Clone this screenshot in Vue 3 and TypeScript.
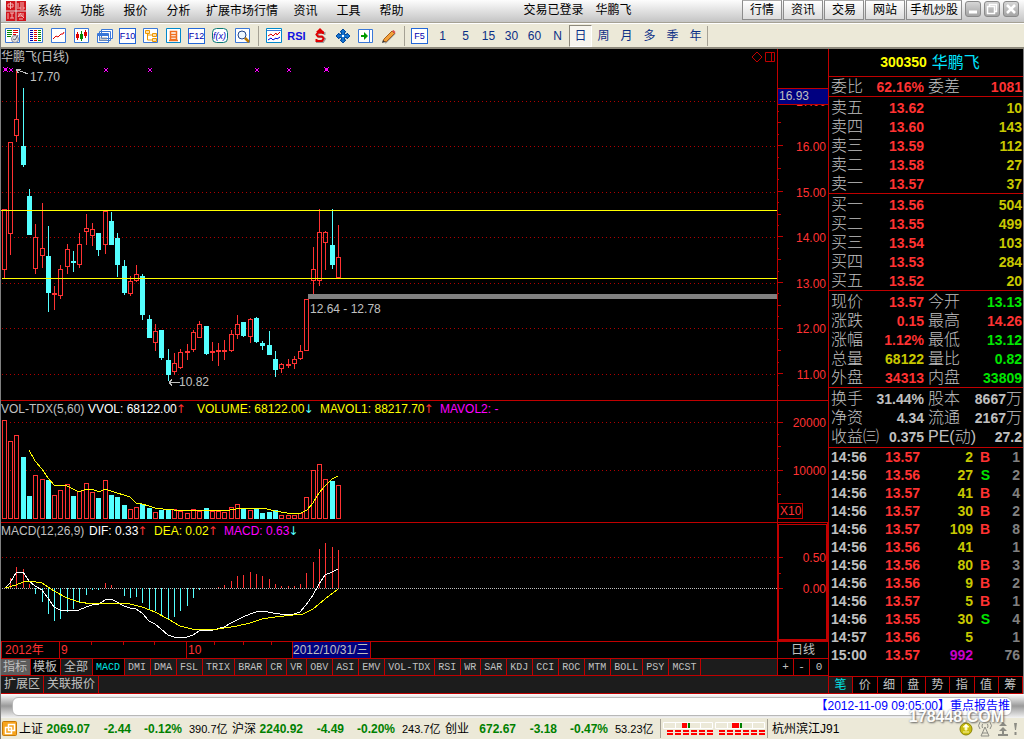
<script setup lang="ts">
import { ref } from 'vue'

type Candle = [number, number, number, number, 0 | 1]

const menus = ['系统', '功能', '报价', '分析', '扩展市场行情', '资讯', '工具', '帮助']
const links = ['行情', '资讯', '交易', '网站', '手机炒股']
const periods = ['1', '5', '15', '30', '60', 'N', '日', '周', '月', '多', '季', '年']
const period = ref('日')

// Horizontal centre of every trading day on the shared time axis
const slots = [
  3, 9, 15, 22, 28, 34, 41, 47, 53, 59, 66, 72, 78, 85, 91, 97, 104, 110, 116, 123, 129, 135, 141, 148, 154, 160, 167,
  173, 179, 186, 192, 198, 205, 211, 217, 223, 230, 236, 242, 249, 255, 261, 268, 274, 280, 287, 293, 299, 305, 312,
  318, 324, 331, 337,
]

// high, body top, body bottom, low, falling day
const candles: Candle[] = [
  [161, 161, 222, 230, 0], [94, 94, 186, 207, 0], [23, 71, 88, 94, 0], [40, 98, 117, 119, 1], [141, 148, 187, 187, 1],
  [176, 189, 221, 226, 0], [155, 200, 208, 220, 0], [178, 208, 245, 264, 1], [238, 245, 247, 262, 0],
  [217, 221, 248, 251, 0], [196, 201, 219, 226, 0], [203, 213, 215, 224, 1], [185, 196, 217, 220, 0],
  [166, 180, 184, 197, 0], [175, 181, 188, 198, 0], [185, 185, 202, 208, 1], [163, 163, 197, 206, 0],
  [164, 173, 197, 197, 1], [185, 190, 217, 229, 1], [212, 218, 245, 247, 1], [228, 233, 246, 248, 0],
  [217, 226, 233, 234, 0], [226, 228, 267, 272, 1], [267, 271, 290, 290, 1], [276, 283, 295, 303, 0],
  [282, 282, 310, 312, 1], [301, 312, 327, 333, 1], [305, 315, 324, 327, 0], [301, 304, 320, 321, 0],
  [296, 303, 305, 312, 0], [282, 284, 302, 304, 0], [273, 276, 290, 290, 0], [278, 278, 306, 307, 1],
  [294, 303, 304, 313, 0], [295, 302, 304, 318, 0], [292, 302, 304, 312, 0], [282, 286, 303, 304, 0],
  [267, 276, 287, 291, 0], [274, 274, 288, 289, 1], [270, 271, 289, 295, 0], [269, 270, 294, 295, 1],
  [293, 295, 298, 302, 1], [283, 297, 307, 307, 1], [303, 311, 322, 329, 1], [315, 316, 321, 325, 0],
  [311, 316, 318, 320, 0], [308, 311, 316, 321, 0], [297, 303, 311, 312, 0], [251, 251, 303, 303, 0],
  [199, 221, 233, 246, 0], [161, 184, 233, 238, 0], [183, 184, 195, 222, 0], [161, 197, 217, 221, 1],
  [177, 209, 230, 230, 0],
]
const volumeTops = [
  3, 24, 18, 40, 79, 58, 62, 63, 78, 73, 67, 79, 74, 66, 75, 81, 63, 78, 80, 88, 92, 90, 87, 91, 95, 93, 93, 92, 94, 96,
  92, 94, 91, 94, 94, 95, 90, 87, 91, 93, 91, 96, 95, 93, 98, 98, 98, 96, 80, 53, 47, 62, 64, 68,
]
const cyanVolumes = [3, 4, 7, 11, 15, 17, 18, 19, 22, 23, 25, 26, 32, 38, 40, 41, 42, 43, 52]
const macdEnds = [
  49, 39, 28, 30, 45, 55, 63, 75, 82, 80, 73, 70, 64, 56, 51, 51, 44, 46, 49, 57, 59, 58, 64, 70, 72, 76, 80, 78, 72,
  67, 59, 51, 49, 49, 48, 46, 42, 37, 36, 33, 35, 37, 40, 45, 47, 47, 47, 45, 34, 23, 10, 4, 8, 11,
]
const volumeAverage =
  '28,33 34,44 41,52 47,61 53,68 59,68 66,69 72,72 78,75 85,72 91,72 98,75 104,72 110,74 116,76 123,78 129,80 135,86 141,87 148,89 154,91 162,92 173,93 199,93 229,93 242,91 255,91 266,92 274,94 286,96 298,97 306,93 312,86 318,76 324,69 331,62 337,59'
const dif =
  '4,49 9,44 15,34 22,33 28,42 34,47 41,51 47,59 53,68 59,71 66,71 78,71 85,68 91,66 98,65 104,61 110,60 116,63 123,67 129,69 135,70 141,74 148,82 154,85 160,90 167,96 173,98 186,98 192,96 198,92 212,91 223,88 230,84 236,81 242,78 249,75 255,73 262,72 272,74 286,76 293,75 299,73 305,66 312,56 318,45 324,36 331,33 337,30'
const dea =
  '4,49 15,46 22,43 28,42 41,44 53,52 66,59 78,63 91,65 104,64 116,64 129,65 141,68 154,73 167,80 179,87 191,90 217,90 236,87 249,84 261,80 274,78 292,76 302,75 312,70 324,60 337,50'

const priceGrid = [53, 98, 144, 189, 235, 280, 326]
const priceLabels = ['17.00', '16.00', '15.00', '14.00', '13.00', '12.00', '11.00']
const priceTicks = Array.from({ length: 25 }, (_, k) => ({
  y: Math.round(63 + k * 11.4),
  len: (k + 1) % 4 === 0 ? 5 : (k + 1) % 2 === 0 ? 3 : 1,
}))
const volumeTicks = [21, 33, 45, 57, 69, 81, 93, 105]
const marks = [{ x: 4, big: true }, { x: 10 }, { x: 105 }, { x: 149 }, { x: 256 }, { x: 288 }, { x: 325, big: true }]

const indicators = [
  'DMI', 'DMA', 'FSL', 'TRIX', 'BRAR', 'CR', 'VR', 'OBV', 'ASI', 'EMV', 'VOL-TDX', 'RSI', 'WR', 'SAR', 'KDJ', 'CCI',
  'ROC', 'MTM', 'BOLL', 'PSY', 'MCST',
]
const sells = [['卖五', '13.62', '10'], ['卖四', '13.60', '143'], ['卖三', '13.59', '112'], ['卖二', '13.58', '27'], ['卖一', '13.57', '37']]
const buys = [['买一', '13.56', '504'], ['买二', '13.55', '499'], ['买三', '13.54', '103'], ['买四', '13.53', '284'], ['买五', '13.52', '20']]
// label, value, tone, label, value, tone
const quotes = [
  ['现价', '13.57', 'up', '今开', '13.13', 'down'],
  ['涨跌', '0.15', 'up', '最高', '14.26', 'up'],
  ['涨幅', '1.12%', 'up', '最低', '13.12', 'down'],
  ['总量', '68122', 'amount', '量比', '0.82', 'down'],
  ['外盘', '34313', 'up', '内盘', '33809', 'down'],
]
const basics = [
  ['换手', '31.44%', '', '股本', '8667', '万'],
  ['净资', '4.34', '', '流通', '2167', '万'],
  ['收益㈢', '0.375', '', 'PE(动)', '27.2', ''],
]
const trades = [
  ['14:56', '13.57', '2', 'B', '1'], ['14:56', '13.56', '27', 'S', '2'], ['14:56', '13.57', '41', 'B', '4'],
  ['14:56', '13.57', '30', 'B', '2'], ['14:56', '13.57', '109', 'B', '8'], ['14:56', '13.56', '41', '', '1'],
  ['14:56', '13.56', '80', 'B', '3'], ['14:56', '13.56', '9', 'B', '2'], ['14:56', '13.57', '5', 'B', '1'],
  ['14:56', '13.55', '30', 'S', '4'], ['14:57', '13.56', '5', '', '1'], ['15:00', '13.57', '992', '', '76'],
]
const views = ['笔', '价', '细', '盘', '势', '指', '值', '筹']
const indices = [
  ['上证', '2069.07', '-2.44', '-0.12%', '390.7亿'],
  ['沪深', '2240.92', '-4.49', '-0.20%', '243.7亿'],
  ['创业', '672.67', '-3.18', '-0.47%', '53.23亿'],
]
</script>

<template>
  <div class="app">
    <header class="menubar">
      <svg class="brand" width="20" height="20" viewBox="0 0 20 20">
        <path d="M0 0h9.500v9.500H0zM10.500 0H20v9.500h-9.500zM0 10.500h9.500V20H0zM10.500 10.500H20V20h-9.500z" fill="#d0141c" />
        <path d="M2 3h5v3H2zM4.500 1v7M12 2v6M14 2h4M14 4h4M14 6h4v2h-4zM2 12v6M4 12h4M6 12v5M4 17h4M12 13h6M12 15h6M15 12l-3 4M15 14l3 3M13 18h4" fill="none" stroke="#f3b3b3" />
      </svg>
      <nav class="menus">
        <button v-for="m in menus" :key="m" class="menu" type="button">{{ m }}</button>
      </nav>
      <div class="login"><span>交易已登录</span><span>华鹏飞</span></div>
      <div class="links">
        <button v-for="l in links" :key="l" class="link" type="button">{{ l }}</button>
      </div>
      <div class="wins">
        <button type="button" class="win" aria-label="最小化"><svg width="16" height="16"><path d="M4 11h8" stroke="#fff" stroke-width="3" /></svg></button>
        <button type="button" class="win" aria-label="还原"><svg width="16" height="16"><path d="M5.500 5V3.500h7v7H11M3.500 5.500h7v7h-7z" fill="none" stroke="#fff" stroke-width="1.500" /></svg></button>
        <button type="button" class="win" aria-label="关闭"><svg width="16" height="16"><path d="M4 4l8 8M12 4l-8 8" stroke="#fff" stroke-width="2.500" /></svg></button>
      </div>
    </header>

    <div class="toolbar">
      <button type="button" class="tool" aria-label="自选"><svg width="16" height="16"><path d="M.5.5h14v14H.5z" fill="#fff" stroke="#3a78d8" /><path d="M2 2.500h5M2 4.500h5M2 6.500h5M2 8.500h4" stroke="#080" /><path d="M8 2.500h5M8 4.500h5M8 6.500h3" stroke="#d00" /><circle cx="10" cy="11" r="3.500" fill="#e4e4e4" stroke="#889" /><path d="M8 11l2 1 3-5" fill="none" stroke="#667" /></svg></button>
      <button type="button" class="tool" aria-label="行情"><svg width="16" height="16"><path d="M.5.5h14v14H.5z" fill="#fff" stroke="#3a78d8" /><path d="M3.500 2v12" stroke="#00a" stroke-width="3" stroke-dasharray="1 1" /><path d="M7.500 2v12" stroke="#d00" stroke-width="3" stroke-dasharray="1 1" /><path d="M11.500 2v12" stroke="#080" stroke-width="3" stroke-dasharray="1 1" /></svg></button>
      <button type="button" class="tool" aria-label="分时"><svg width="16" height="16"><path d="M.5.5h14v14H.5z" fill="#fff" stroke="#3a78d8" /><path d="M2 11l3-3 2 1 3-3h2l1-2" fill="none" stroke="#d00" /></svg></button>
      <button type="button" class="tool" aria-label="K线"><svg width="16" height="16"><path d="M.5.5h14v14H.5z" fill="#fff" stroke="#3a78d8" /><path d="M3.500 4v8M11.500 2v8" stroke="#d00" /><path d="M7.500 3v10" stroke="#080" /><path d="M2 6h3v4H2zM10 4h3v4h-3z" fill="#d00" /><path d="M6 6h3v5H6z" fill="#080" /></svg></button>
      <button type="button" class="tool" aria-label="窗口"><svg width="16" height="16"><path d="M4.500 1.500h11v9h-11zM2.500 3.500h11v9h-11zM.5 5.500h11v9H.5z" fill="#fff" stroke="#3a78d8" /><path d="M1 7h10" stroke="#3a78d8" stroke-width="2" /><path d="M2 10h8M2 12h8" stroke="#999" /></svg></button>
      <button type="button" class="tool boxed">F10</button>
      <button type="button" class="tool" aria-label="板块"><svg width="16" height="16"><path d="M.5.5h14v14H.5z" fill="#fff" stroke="#3a78d8" /><path d="M2.500 2.500h4v3h-4zM9.500 5.500h4v3h-4zM9.500 10.500h4v3h-4z" fill="#fda" stroke="#e90" /><path d="M4.500 6v6H9M4.500 7H9" fill="none" stroke="#e90" /></svg></button>
      <button type="button" class="tool" aria-label="自选股"><svg width="16" height="16"><path d="M.5.5h14v14H.5z" fill="#fff" stroke="#08c" /><path d="M4.500 3.500h6v8h-6zM5 6.500h5M5 9h5M3 12.500h9" fill="none" stroke="#f07020" stroke-width="1.500" /></svg></button>
      <button type="button" class="tool boxed">F12</button>
      <button type="button" class="tool" aria-label="公式"><svg width="16" height="16"><rect x=".5" y=".5" width="15" height="14" rx="4" fill="#fff" stroke="#087878" /><text x="1" y="11" class="fx">f(x)</text></svg></button>
      <button type="button" class="tool" aria-label="查找"><svg width="16" height="16"><path d="M.5.5h14v14H.5z" fill="#fff" stroke="#3a78d8" /><circle cx="7" cy="7" r="4" fill="#eff8ff" stroke="#248" /><path d="M10 10l4 4" stroke="#b70" stroke-width="2.500" /></svg></button>
      <i class="sep"></i>
      <button type="button" class="tool" aria-label="叠加"><svg width="16" height="16"><path d="M.5.5h15v14H.5z" fill="#fff" stroke="#08c" /><path d="M1 2.500h14" stroke="#3a78d8" /><path d="M2 8l3-2 2 2 3-3 1 2 3-3" fill="none" stroke="#d00" /><path d="M2 12l3-2 2 2 3-2 1 1 3-2" fill="none" stroke="#00d" /></svg></button>
      <button type="button" class="tool rsi">RSI</button>
      <button type="button" class="tool" aria-label="资金"><svg width="16" height="16"><path d="M12.500 7V5h-5L5 7l2 2h4l2 2-2 3H5v-2" fill="none" stroke="#999" stroke-width="2" /><path d="M11 6V4.500H6L4.500 6.500 6 8.500h4l1.500 2L10 13H4.500v-2" fill="none" stroke="#e00000" stroke-width="2" /><path d="M8 0l4 4H4z" fill="#e00000" /></svg></button>
      <button type="button" class="tool" aria-label="移动"><svg width="16" height="16"><path d="M8 1l3 3H9.500v2.500H12V5l3 3-3 3V9.500H9.500V12H11l-3 3-3-3h1.500V9.500H4V11L1 8l3-3v1.500h2.500V4H5z" fill="#1574d0" stroke="#024a9c" /><path d="M7 7h2v2H7z" fill="#fff" /></svg></button>
      <button type="button" class="tool" aria-label="侧栏"><svg width="16" height="16"><path d="M.5 1.500h14v13H.5zM11.500 2v12" fill="#fff" stroke="#3a78d8" /><path d="M3 7h3V4l4 4-4 4V9H3z" fill="#090" /></svg></button>
      <button type="button" class="tool" aria-label="画线"><svg width="16" height="16"><path d="M4 15l10-10" stroke="#999" stroke-width="2" /><path d="M2 13.500L3 11l8-8 2.500 2.500-8 8z" fill="#f2a03c" stroke="#a56018" /><path d="M11 3l2.500 2.500 1-1.500L12.500 2z" fill="#e05050" /><path d="M1 15l1-3 2 2z" fill="#333" /></svg></button>
      <i class="sep"></i>
      <button type="button" class="tool boxed">F5</button>
      <button v-for="p in periods" :key="p" type="button" class="tool period" :class="{ pressed: p === period }" @click="period = p">{{ p }}</button>
      <i class="sep end"></i>
    </div>

    <main class="work">
      <section class="left">
        <div class="panel price">
          <div class="plot">
            <div class="legend title">
              <span>华鹏飞(日线)</span>
              <svg width="26" height="12"><path d="M6 1l5 5-5 5-5-5zM14.500 1.500h9v9h-9zM20.500 2v8" fill="none" stroke="#c00000" /></svg>
            </div>
            <svg class="chart">
              <g transform="translate(0 -17)">
                <line v-for="g in priceGrid" :key="g" class="grid" x1="1" x2="100%" :y1="g + 0.5" :y2="g + 0.5" />
                <path v-for="m in marks" :key="m.x" :transform="`translate(${m.x} 21)`" :d="m.big ? 'M-2-2h1v1h3v-1h1v1h-1v3h1v1h-1v-1h-3v1h-1v-1h1v-3h-1z' : 'M-2-1h1v1h-1zM1-1h1v1h-1zM-1 0h2v2h-2zM-2 2h1v1h-1zM1 2h1v1h-1z'" class="mark" />
                <g v-for="(c, i) in candles" :key="i" :class="c[4] ? 'fall' : 'rise'">
                  <rect class="wick" :x="slots[i]" :y="c[0]" width="1" :height="c[1] - c[0]" />
                  <rect class="wick" :x="slots[i]" :y="c[2]" width="1" :height="c[3] - c[2]" />
                  <rect v-if="c[4]" class="wick" :x="slots[i] - 2" :y="c[1]" width="5" :height="c[2] - c[1]" />
                  <rect v-else class="body" :x="slots[i] - 1.5" :y="c[1] + 0.5" width="4" :height="Math.max(c[2] - c[1] - 1, 1)" />
                </g>
                <line class="level" x1="0" x2="100%" y1="162.500" y2="162.500" />
                <line class="level" x1="1" x2="100%" y1="230.500" y2="230.500" />
                <rect x="307" y="246" width="100%" height="5" fill="#808080" />
                <path class="pointer" d="M15.500 21.500L27 26M15.500 21.500h4M15.500 21.500l2 4M168 334.500h11M168 334.500l3-3M168 334.500l3 3" />
                <text x="29" y="33">17.70</text>
                <text x="178" y="338">10.82</text>
                <text x="309" y="265">12.64 - 12.78</text>
              </g>
            </svg>
          </div>
          <svg class="axis">
            <g transform="translate(0 -1)">
              <rect v-for="t in priceTicks" :key="t.y" x="0" :y="t.y" :width="t.len" height="1" fill="#c00000" />
              <text v-for="(l, i) in priceLabels" :key="l" x="48" :y="priceGrid[i] + 5" text-anchor="end">{{ l }}</text>
              <rect x="0" y="40" width="50" height="17" fill="#c00000" />
              <rect x="0" y="41" width="50" height="15" fill="#000080" />
              <text x="1" y="52" class="now">16.93</text>
            </g>
          </svg>
        </div>

        <div class="panel volume">
          <div class="plot">
            <div class="legend vol-legend">
              <span>VOL-TDX(5,60)</span>
              <span class="white">VVOL: 68122.00<b class="arrow-up">↑</b></span>
              <span class="yellow">VOLUME: 68122.00<b class="arrow-down">↓</b></span>
              <span class="yellow">MAVOL1: 88217.70<b class="arrow-up">↑</b></span>
              <span class="magenta">MAVOL2: -</span>
            </div>
            <svg class="chart">
              <line class="grid" x1="1" x2="100%" y1="5.500" y2="5.500" />
              <line class="grid" x1="1" x2="100%" y1="53.500" y2="53.500" />
              <template v-for="(v, i) in volumeTops" :key="i">
                <rect v-if="cyanVolumes.includes(i)" :x="slots[i] - 2" :y="v" width="5" :height="102 - v" fill="#54ffff" />
                <rect v-else class="bar" :x="slots[i] - 1.5" :y="v + 0.5" width="4" :height="101 - v" />
              </template>
              <polyline :points="volumeAverage" class="line yellow-line" />
            </svg>
          </div>
          <svg class="axis">
            <rect v-for="t in volumeTicks" :key="t" x="0" :y="t" :width="t % 48 === 21 ? 5 : t % 24 === 21 ? 3 : 1" height="1" fill="#c00000" />
            <text x="48" y="26" text-anchor="end">20000</text>
            <text x="48" y="74" text-anchor="end">10000</text>
            <rect x=".5" y="102.500" width="24" height="15" fill="none" stroke="#c00000" />
            <text x="2" y="114">X10</text>
          </svg>
        </div>

        <div class="panel macd">
          <div class="plot">
            <div class="legend macd-legend">
              <span>MACD(12,26,9)</span>
              <span class="white">DIF: 0.33<b class="arrow-up">↑</b></span>
              <span class="yellow">DEA: 0.02<b class="arrow-up">↑</b></span>
              <span class="magenta">MACD: 0.63<b class="arrow-down">↓</b></span>
            </div>
            <svg class="chart">
              <line class="grid" x1="1" x2="100%" y1="18.500" y2="18.500" />
              <line x1="1" x2="100%" y1="49.500" y2="49.500" stroke="#c0c0c0" stroke-dasharray="1 1" />
              <rect v-for="(v, i) in macdEnds" :key="i" :x="slots[i]" :y="Math.min(v, 49)" width="1" :height="Math.abs(v - 49)" :fill="v > 49 ? '#54ffff' : '#ff3232'" />
              <polyline :points="dif" class="line white-line" />
              <polyline :points="dea" class="line yellow-line" />
            </svg>
          </div>
          <svg class="axis boxed-axis">
            <path d="M0 34.500h5M0 50.500h3M0 65.500h5" stroke="#c00000" />
            <text x="48" y="39" text-anchor="end">0.50</text>
            <text x="48" y="70" text-anchor="end">0.00</text>
          </svg>
        </div>

        <div class="timeline">
          <svg class="chart">
            <path d="M.5 0v16M58.500 0v16M185.500 0v16M90.500 0v3M122.500 0v3M153.500 0v3M213.500 0v3M242.500 0v3M270.500 0v3" stroke="#c00000" />
            <rect x="291" y="0" width="79" height="16" fill="#c00000" />
            <rect x="292" y="0" width="77" height="16" fill="#000080" />
            <text x="4" y="12" class="red">2012年</text>
            <text x="60" y="12" class="red">9</text>
            <text x="187" y="12" class="red">10</text>
            <text x="292" y="12">2012/10/31/三</text>
          </svg>
          <div class="cycle">日线</div>
        </div>

        <div class="tabs">
          <button type="button" class="tab cn lit">指标</button>
          <button type="button" class="tab cn dark">模板</button>
          <button type="button" class="tab cn wide">全部</button>
          <button type="button" class="tab active">MACD</button>
          <button v-for="t in indicators" :key="t" type="button" class="tab">{{ t }}</button>
          <div class="zooms">
            <button type="button" class="zoom">+</button>
            <button type="button" class="zoom">-</button>
            <button type="button" class="zoom">0</button>
          </div>
        </div>
        <div class="tabs ext">
          <button type="button" class="tab ext-tab">扩展区</button>
          <button type="button" class="tab ext-tab">关联报价</button>
        </div>
      </section>

      <aside class="right">
        <h1 class="stock"><b>300350</b><span>华鹏飞</span></h1>
        <table class="quote">
          <colgroup><col class="c1" /><col class="c2" /><col class="c1" /><col /></colgroup>
          <tbody class="ratio">
            <tr><th>委比</th><td class="up">62.16%</td><th>委差</th><td class="up">1081</td></tr>
          </tbody>
          <tbody>
            <tr v-for="r in sells" :key="r[0]"><th>{{ r[0] }}</th><td class="up">{{ r[1] }}</td><td></td><td class="amount">{{ r[2] }}</td></tr>
          </tbody>
          <tbody>
            <tr v-for="r in buys" :key="r[0]"><th>{{ r[0] }}</th><td class="up">{{ r[1] }}</td><td></td><td class="amount">{{ r[2] }}</td></tr>
          </tbody>
          <tbody>
            <tr v-for="r in quotes" :key="r[0]"><th>{{ r[0] }}</th><td :class="r[2]">{{ r[1] }}</td><th>{{ r[3] }}</th><td :class="r[5]">{{ r[4] }}</td></tr>
          </tbody>
          <tbody>
            <tr v-for="r in basics" :key="r[0]"><th>{{ r[0] }}</th><td>{{ r[1] }}</td><th>{{ r[3] }}</th><td>{{ r[4] }}<span class="unit">{{ r[5] }}</span></td></tr>
          </tbody>
        </table>
        <table class="trades">
          <colgroup><col class="t1" /><col class="t2" /><col class="t3" /><col class="t4" /><col /></colgroup>
          <tbody>
            <tr v-for="(t, i) in trades" :key="i">
              <td class="time">{{ t[0] }}</td>
              <td class="up">{{ t[1] }}</td>
              <td :class="t[0] === '15:00' ? 'close' : 'amount'">{{ t[2] }}</td>
              <td :class="t[3] === 'S' ? 'down' : 'up'">{{ t[3] }}</td>
              <td class="count">{{ t[4] }}</td>
            </tr>
          </tbody>
        </table>
        <div class="views">
          <button v-for="(v, i) in views" :key="v" type="button" class="view" :class="{ on: i === 0 }">{{ v }}</button>
        </div>
      </aside>
    </main>

    <div class="ticker"><div class="news"><a href="#">【2012-11-09 09:05:00】重点报告推</a></div></div>

    <footer class="status">
      <svg class="swap" width="16" height="16"><rect x=".5" y=".5" width="14" height="14" rx="1" fill="#f7a41d" stroke="#c77a06" /><path d="M6.500 3.500h6v6h-6zM3.500 6.500h6v6h-6z" fill="#f7a41d" stroke="#fff" stroke-width="1.500" /></svg>
      <div v-for="q in indices" :key="q[0]" class="index">
        <span>{{ q[0] }}</span><b>{{ q[1] }}</b><b>{{ q[2] }}</b><b>{{ q[3] }}</b><span class="turnover">{{ q[4] }}</span>
      </div>
      <div class="gauges">
        <svg v-for="n in 2" :key="n" width="50" height="14">
          <path d="M.5.5h49v6H.5zM12.500 0v6M37.500 0v6" fill="none" stroke="#fff" />
          <rect :x="n === 1 ? 19 : 17" y="1" :width="n === 1 ? 5 : 7" height="5" fill="#f00" />
          <rect x="25" y="1" width="2" height="5" fill="#008000" />
          <path d="M4 9h46M4 12h46" stroke="#f00" stroke-width="2" stroke-dasharray="6 2" />
        </svg>
      </div>
      <span class="server">杭州滨江J91</span>
      <div class="tray">
        <svg width="62" height="16">
          <ellipse cx="9" cy="8" rx="6" ry="6" fill="#c9bd10" stroke="#8a8208" /><path d="M9 3l3 3h-2v3H8V6H6zM6 11h6" fill="#fff" stroke="#fff8a0" />
          <g fill="none" stroke="#8c8c84"><path d="M28 6l-4 9h8zM25 12h6M23 1q-3 4 0 7M33 1q3 4 0 7M25.500 3q-1 2 0 4M30.500 3q1 2 0 4" /></g>
          <path d="M46 1l4 4h-8zM46 6l4 4h-8zM45 10h2v3h4v2H41v-2h4zM57 2h3l-1 7h-1zM57.500 11h2v3h-2z" fill="#8c8c84" />
        </svg>
      </div>
      <div class="watermark">178448.COM</div>
    </footer>
  </div>
</template>

<style>
body {
  background: #000;
}
</style>

<style scoped>
.app,
.app * {
  box-sizing: border-box;
}
.app {
  display: flex;
  flex-direction: column;
  min-height: 100vh;
  border-left: 1px solid #808080;
  border-bottom: 1px solid #2a5fd0;
  background: #000;
  color: #c0c0c0;
  font: 12px/16px 'Liberation Sans', 'Noto Sans CJK SC', sans-serif;
  overflow: hidden;
  white-space: nowrap;
}
button {
  margin: 0;
  padding: 0;
  border: 0;
  background: none;
  color: inherit;
  font: inherit;
}
.menubar {
  display: flex;
  align-items: flex-start;
  height: 23px;
  padding-right: 5px;
  border-bottom: 1px solid #a5a194;
  background: linear-gradient(#fdfdfd, #c4c4c4);
  color: #000;
}
.brand {
  margin: 1px 2px 0 5px;
}
.menus {
  display: flex;
  height: 22px;
}
.menu {
  min-width: 43px;
  padding: 0 6px;
}
.login {
  display: flex;
  flex: 1;
  gap: 12px;
  justify-content: center;
  line-height: 21px;
}
.links {
  display: flex;
  gap: 1px;
}
.link {
  height: 20px;
  padding: 0 7px;
  border: 1px solid #8c8c8c;
  border-top-color: #aaa;
  background: linear-gradient(#fff, #dcdcdc);
}
.link:last-child {
  padding: 0 3px;
}
.wins {
  display: flex;
  gap: 3px;
  padding: 1px 0 0 3px;
}
.win {
  width: 16px;
  height: 16px;
  border: 1px solid #8a8a8a;
  border-radius: 3px;
  background: linear-gradient(#d6d6d6, #a4a4a4);
}
.win svg {
  display: block;
  margin: -1px;
}
.toolbar {
  display: flex;
  align-items: center;
  height: 26px;
  border-top: 1px solid #fff;
  border-bottom: 2px solid #8d897c;
  background: #ece9d8;
}
.tool {
  display: flex;
  align-items: center;
  justify-content: center;
  width: 23px;
  height: 22px;
}
.boxed {
  width: 17px;
  height: 16px;
  margin: 0 3px;
  border: 1px solid #2468d8;
  background: #fff;
  color: #0000b0;
  font-size: 9px;
}
.fx {
  fill: #0000c0;
  font: italic 9px 'Liberation Sans', sans-serif;
}
.rsi {
  color: #1010e0;
  font-size: 11px;
  font-weight: bold;
}
.period {
  color: #0a2f86;
}
.pressed {
  border: 1px solid;
  border-color: #8d897c #fff #fff #8d897c;
  background: #f7f5ee;
}
.sep {
  width: 1px;
  height: 20px;
  margin: 0 3px 0 4px;
  background: #a5a194;
}
.end {
  margin: 0;
}
.work {
  display: grid;
  flex: 1;
  grid-template-columns: minmax(0, 1fr) 195px;
  border-right: 1px solid #808080;
}
.left {
  display: flex;
  flex-direction: column;
}
.panel {
  display: grid;
  grid-template-rows: minmax(0, 1fr);
  grid-template-columns: minmax(0, 1fr) 51px;
  min-height: 0;
}
.price {
  flex: 1 0 351px;
}
.volume {
  flex: 0 0 122px;
  border-top: 1px solid #c00000;
}
.macd {
  flex: 0 0 119px;
  border-top: 1px solid #c00000;
}
.plot {
  display: flex;
  flex-direction: column;
  min-height: 0;
}
.legend {
  height: 16px;
  line-height: 16px;
}
.title {
  display: flex;
  align-items: center;
  justify-content: space-between;
}
.vol-legend {
  display: grid;
  grid-template-columns: 87px 109px 123px 120px 1fr;
}
.macd-legend {
  display: grid;
  grid-template-columns: 88px 65px 70px 1fr;
}
.chart {
  display: block;
  flex: 1;
  width: 100%;
  height: 0;
  min-height: 0;
  overflow: hidden;
  shape-rendering: crispEdges;
}
.chart text {
  fill: #c0c0c0;
}
.chart .red,
.axis text {
  fill: #ff3232;
}
.axis {
  display: block;
  width: 100%;
  height: 0;
  min-height: 100%;
  border-left: 1px solid #c00000;
}
.axis .now {
  fill: #c0c0c0;
}
.boxed-axis {
  border-right: 1px solid #c00000;
  border-bottom: 1px solid #c00000;
  outline: 1px solid #c00000;
  outline-offset: -2px;
}
.grid {
  stroke: #b00000;
  stroke-dasharray: 1 3;
}
.level {
  stroke: #ff0;
}
.mark {
  fill: #f0f;
}
.pointer {
  fill: none;
  stroke: #c0c0c0;
}
.rise .wick {
  fill: #ff3232;
}
.fall .wick {
  fill: #54ffff;
}
.body,
.bar {
  fill: none;
  stroke: #ff3232;
}
.line {
  fill: none;
}
.yellow-line {
  stroke: #ff0;
}
.white-line {
  stroke: #fff;
}
.white {
  color: #fff;
}
.yellow {
  color: #ff0;
}
.magenta {
  color: #f0f;
}
.arrow-up {
  color: #ff3232;
}
.arrow-down {
  color: #54ffff;
}
.arrow-up,
.arrow-down {
  font-family: 'DejaVu Sans', sans-serif;
  font-weight: normal;
  margin-left: -1px;
}
.timeline {
  display: flex;
  height: 17px;
  border-top: 1px solid #c00000;
}
.timeline .chart {
  height: 16px;
}
.cycle {
  width: 51px;
  border-left: 1px solid #c00000;
  text-align: center;
}
.tabs {
  display: flex;
  height: 17px;
  border-top: 1px solid #c00000;
  background: #1c1c1c;
}
.tab {
  padding: 0 4px 0 3px;
  border-right: 1px solid #c00000;
  font: 10px/15px 'Liberation Mono', monospace;
}
.cn {
  padding: 0 3px 0 2px;
  font: 12px/16px 'Liberation Sans', 'Noto Sans CJK SC', sans-serif;
}
.wide {
  padding: 0 4px 0 3px;
}
.lit {
  background: #5c5c5c;
}
.dark,
.active {
  background: #000;
}
.active {
  color: #00e5e5;
}
.zooms {
  display: grid;
  grid-template-columns: 16px 16px 19px;
  margin-left: auto;
  background: #000;
}
.zoom {
  border-left: 1px solid #c00000;
  font: 11px/15px 'Liberation Mono', monospace;
}
.ext {
  height: 19px;
  border-bottom: 1px solid #c00000;
}
.ext-tab {
  padding: 0 3px;
  font: 12px/17px 'Liberation Sans', 'Noto Sans CJK SC', sans-serif;
}
.right {
  display: flex;
  flex-direction: column;
  border-left: 1px solid #c00000;
}
.stock {
  display: flex;
  gap: 5px;
  justify-content: center;
  height: 27px;
  margin: 0;
  padding-left: 8px;
  font: 16px/27px 'Liberation Sans', 'Noto Sans CJK SC', sans-serif;
}
.stock b {
  color: #ff0;
  font-size: 14px;
}
.stock span {
  color: #00e5ff;
}
table {
  width: 100%;
  table-layout: fixed;
  border-collapse: separate;
  border-spacing: 0;
}
th,
td {
  height: 19px;
  padding: 0;
  font: bold 14px/18px 'Liberation Sans', 'Noto Sans CJK SC', sans-serif;
  text-align: right;
}
th {
  font-size: 16px;
  font-weight: 300;
  text-align: left;
}
.unit {
  font-size: 16px;
  font-weight: 300;
}
.quote th:first-child {
  padding-left: 2px;
}
.quote th:nth-child(3) {
  padding-left: 4px;
}
.quote td:last-child {
  padding-right: 1px;
}
.quote tr:first-child > * {
  height: 21px;
  border-top: 1px solid #c00000;
  padding-top: 1px;
}
.quote .ratio tr:first-child > * {
  height: 20px;
  padding-top: 0;
}
.quote {
  padding-bottom: 1px;
  border-bottom: 1px solid #c00000;
}
.c1 {
  width: 36px;
}
.c2 {
  width: 59px;
}
.t1 {
  width: 45px;
}
.t2 {
  width: 46px;
}
.t3 {
  width: 53px;
}
.t4 {
  width: 17px;
}
.trades td {
  height: 18px;
}
.trades .time {
  padding-left: 2px;
  text-align: left;
}
.trades .count {
  padding-right: 3px;
  color: #808080;
}
.up {
  color: #ff3232;
}
.down {
  color: #00e600;
}
.amount {
  color: #c8c800;
}
.close {
  color: #c800c8;
}
.views {
  display: grid;
  grid-template-columns: repeat(8, 1fr);
  height: 18px;
  margin-top: auto;
  border: solid #c00000;
  border-width: 1px 0;
}
.view {
  border-right: 1px solid #c00000;
}
.on {
  background: #1c1c1c;
  color: #00e5e5;
}
.ticker {
  height: 24px;
  padding: 3px 12px 2px 11px;
  background: linear-gradient(#fff, #9a9a9a 50%, #f4f4f4);
}
.news {
  height: 19px;
  padding-right: 1px;
  border: 1px solid #b8b8b8;
  border-radius: 6px;
  background: #fff;
  text-align: right;
}
.news a {
  color: #00f;
  line-height: 17px;
  text-decoration: none;
}
.status {
  position: relative;
  display: flex;
  align-items: center;
  height: 21px;
  padding-left: 1px;
  background: #ece9d8;
  color: #000;
}
.swap {
  margin-right: 1px;
}
.index {
  display: grid;
  grid-template-columns: 24px 47px 41px 51px 50px;
}
.index b {
  color: #008000;
  text-align: right;
}
.turnover {
  padding-left: 7px;
  font-size: 11px;
}
.gauges {
  display: flex;
  gap: 2px;
  align-items: center;
  height: 19px;
  margin-left: 2px;
  padding: 0 2px;
  border: solid #a5a194;
  border-width: 0 1px;
}
.server {
  padding-left: 4px;
}
.tray {
  display: flex;
  margin-left: auto;
  padding-right: 5px;
}
.watermark {
  position: absolute;
  right: 20px;
  top: -11px;
  color: #fff;
  font: bold 16px/20px 'Liberation Sans', sans-serif;
  text-shadow: 1px 1px 2px #555, 0 0 2px #888;
  opacity: 0.85;
}
</style>
